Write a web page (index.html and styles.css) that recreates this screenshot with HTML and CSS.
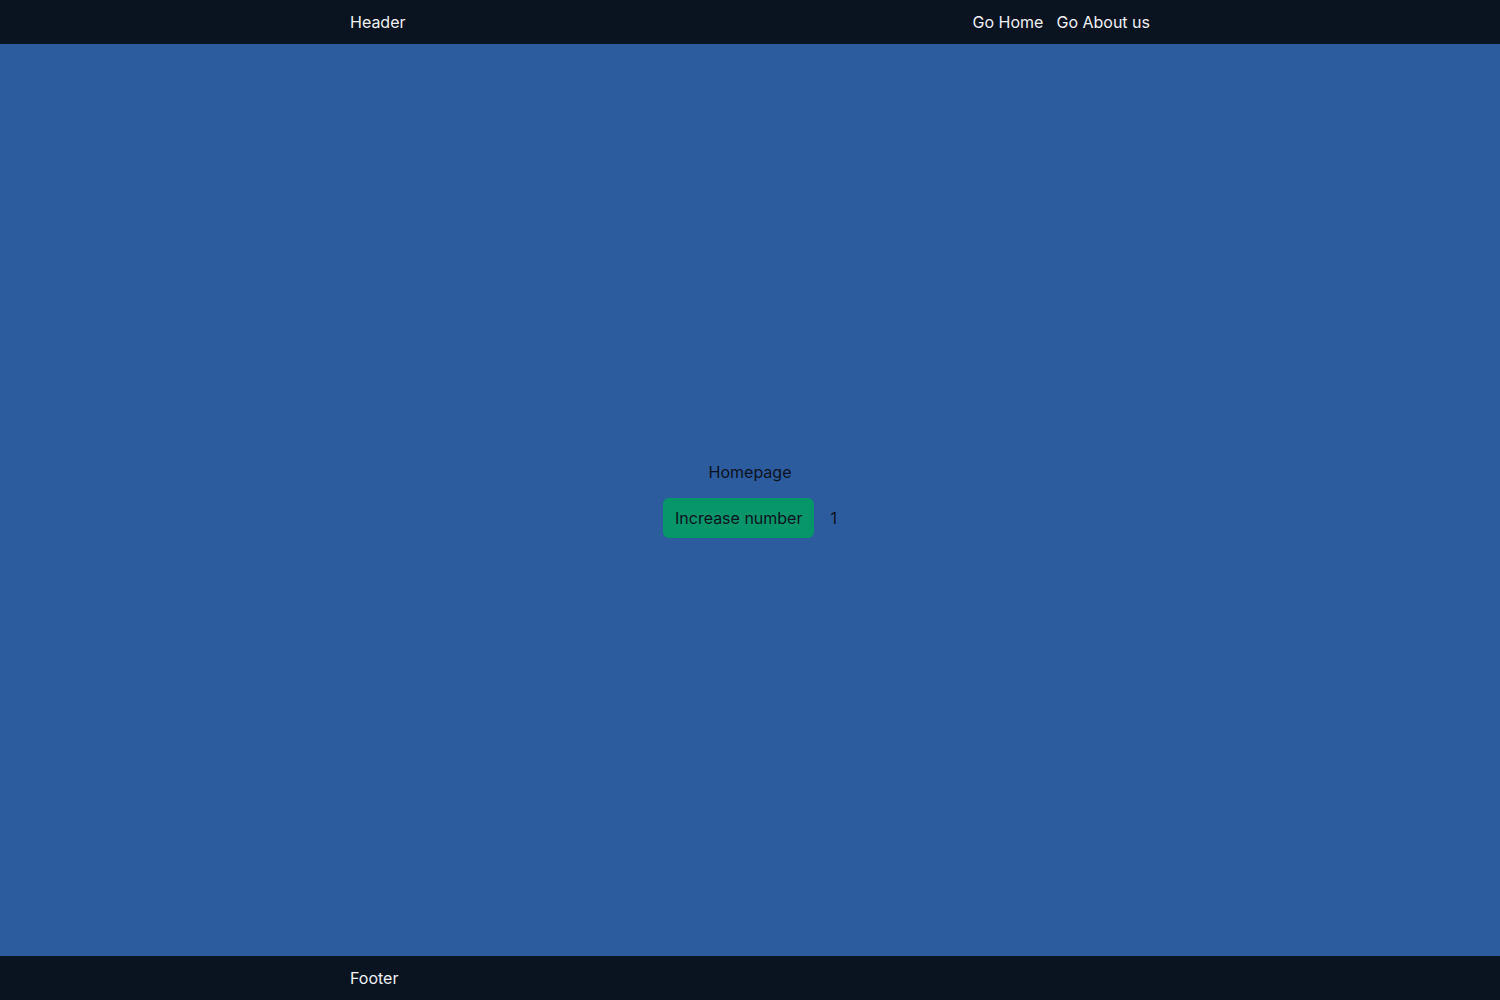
FILE: index.html
```html
<!DOCTYPE html>
<html lang="en">
<head>
<meta charset="utf-8">
<title>Homepage</title>
<link rel="stylesheet" href="styles.css">
</head>
<body>
<div class="page">
  <header class="bar">
    <div class="container bar-inner">
      <span>Header</span>
      <nav class="nav">
        <a href="#">Go Home</a>
        <a href="#">Go About us</a>
      </nav>
    </div>
  </header>
  <main class="main">
    <p class="title">Homepage</p>
    <div class="row">
      <button class="btn">Increase number</button>
      <span class="count">1</span>
    </div>
  </main>
  <footer class="bar">
    <div class="container bar-inner">
      <span>Footer</span>
    </div>
  </footer>
</div>
</body>
</html>
```
FILE: styles.css
```css
* { box-sizing: border-box; }
html, body { margin: 0; padding: 0; height: 100%; }
body {
  font-family: Inter, "Noto Sans", sans-serif;
  font-size: 16px;
  line-height: 24px;
  color: #0b1220;
}
.page {
  display: flex;
  flex-direction: column;
  min-height: 100vh;
}
.bar {
  background: #0a1320;
  color: #eef0f3;
  height: 44px;
  flex: none;
}
.container {
  width: 800px;
  margin: 0 auto;
}
.bar-inner {
  height: 100%;
  display: flex;
  align-items: center;
  justify-content: space-between;
}
.nav {
  display: flex;
  gap: 13px;
}
.nav a {
  color: #eef0f3;
  text-decoration: none;
}
.main {
  flex: 1;
  background: #2c5c9e;
  display: flex;
  flex-direction: column;
  align-items: center;
  justify-content: center;
  gap: 16px;
}
.title { margin: 0; line-height: 20px; }
.row {
  display: flex;
  align-items: center;
  gap: 16px;
}
.btn {
  font: inherit;
  color: #0b1220;
  background: #079669;
  border: none;
  border-radius: 6px;
  height: 40px;
  padding: 0 12px;
}
```
